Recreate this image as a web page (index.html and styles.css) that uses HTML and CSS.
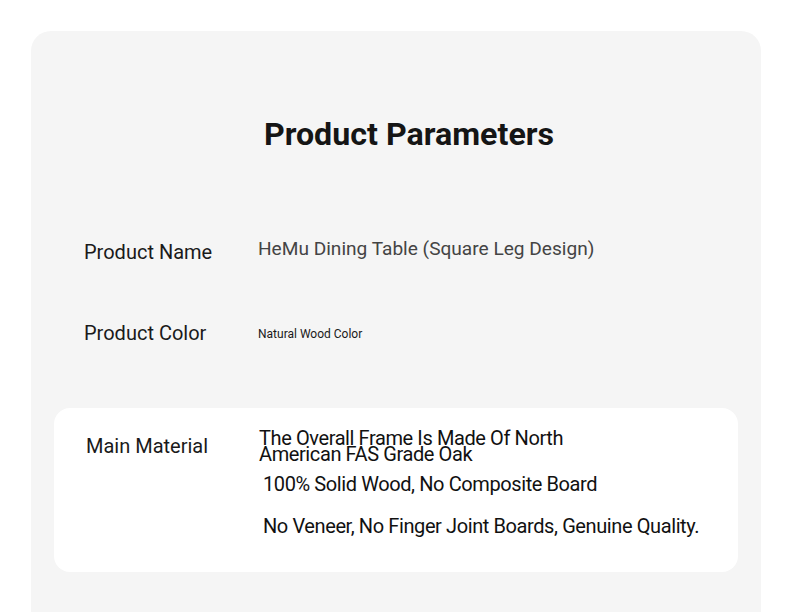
FILE: index.html
```html
<!DOCTYPE html>
<html>
<head>
<meta charset="utf-8">
<link rel="stylesheet" href="styles.css">
</head>
<body>
<div class="panel">
  <h1 class="title">Product Parameters</h1>
  <div class="row row-name">
    <div class="label">Product Name</div>
    <div class="value value-name">HeMu Dining Table (Square Leg Design)</div>
  </div>
  <div class="row row-color">
    <div class="label">Product Color</div>
    <div class="value value-color">Natural Wood Color</div>
  </div>
  <div class="card">
    <div class="label label-card">Main Material</div>
    <div class="mat">
      <div class="mat-head">The Overall Frame Is Made Of North<br>American FAS Grade Oak</div>
      <div class="mat-line mat-line1">100% Solid Wood, No Composite Board</div>
      <div class="mat-line mat-line2">No Veneer, No Finger Joint Boards, Genuine Quality.</div>
    </div>
  </div>
</div>
</body>
</html>
```
FILE: styles.css
```css
html, body {
  margin: 0;
  padding: 0;
  background: #ffffff;
  font-family: Roboto, "Liberation Sans", sans-serif;
}
body {
  padding: 31px 29px 0 31px;
  height: 612px;
  box-sizing: border-box;
  overflow: hidden;
}
.panel {
  background: #f5f5f5;
  border-radius: 20px 20px 0 0;
  height: 581px;
  padding: 0 23px;
  display: flex;
  flex-direction: column;
}
.title {
  margin: 0;
  padding: 85px 0 0 26px;
  text-align: center;
  font-size: 32.2px;
  font-weight: 700;
  color: #151515;
  line-height: 36px;
}
.row {
  display: flex;
  align-items: flex-start;
  padding-left: 30px;
}
.row-name { margin-top: 85px; }
.row-color { margin-top: 57px; }
.label {
  width: 174px;
  flex: none;
  font-size: 20px;
  color: #1a1a1a;
  line-height: 24px;
}
.row-name .label { padding-top: 3px; }
.value-name {
  font-size: 19.1px;
  line-height: 24px;
  color: #444444;
}
.value-color {
  font-size: 12px;
  line-height: 16px;
  padding-top: 5px;
  color: #1a1a1a;
}
.card {
  margin-top: 63px;
  background: #ffffff;
  border-radius: 16px;
  height: 164px;
  box-sizing: border-box;
  display: flex;
  align-items: flex-start;
  padding: 22px 0 0 32px;
}
.label-card {
  width: 173px;
  padding-top: 4px;
}
.mat-head {
  font-size: 20px;
  line-height: 16px;
  color: #111;
  letter-spacing: -0.4px;
}
.mat-line {
  font-size: 20px;
  line-height: 24px;
  color: #111;
  padding-left: 4px;
  letter-spacing: -0.4px;
}
.mat-line1 { margin-top: 10px; }
.mat-line2 { margin-top: 18px; }
```
